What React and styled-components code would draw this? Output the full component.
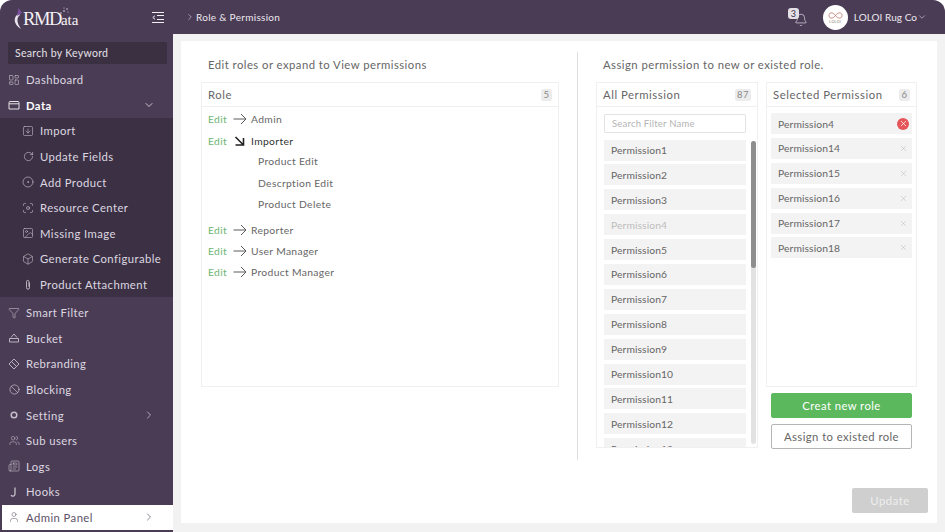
import React from "react";
import styled, { createGlobalStyle } from "styled-components";
import {
  LayoutDashboard,
  SquareArrowDown,
  RotateCw,
  CircleDot,
  Focus,
  Image,
  Box,
  Filter,
  Ban,
  Users,
  Newspaper,
  User,
  ChevronDown,
  ChevronRight,
  Bell,
  X,
} from "lucide-react";

const FONT = `"Lato", "Noto Sans", sans-serif`;

const GlobalStyle = createGlobalStyle`
  html, body {
    margin: 0;
    padding: 0;
    background: #fff;
  }
  body {
    width: 945px;
    height: 532px;
    overflow: hidden;
    font-family: ${FONT};
  }
  * {
    box-sizing: border-box;
  }
`;

const Shell = styled.div`
  width: 945px;
  height: 532px;
  display: grid;
  grid-template-columns: 173px 772px;
  grid-template-rows: 34px 1fr;
  background: #4b3c55;
  border-radius: 12px 12px 0 0;
  overflow: hidden;
`;

const Brand = styled.div`
  display: flex;
  align-items: center;
  justify-content: space-between;
  padding: 0 9px 0 12px;
  color: #f3f0f5;
`;

const LogoWrap = styled.div`
  position: relative;
  display: flex;
  align-items: center;
  height: 30px;
  margin-top: 4px;
`;

const LogoText = styled.span`
  font-family: "Liberation Serif", serif;
  font-size: 18.5px;
  letter-spacing: -1.4px;
  margin-left: -2px;
  color: #f5f2f7;
  small {
    font-size: 15px;
    letter-spacing: 0;
  }
`;

const Sparkles = styled.svg`
  position: absolute;
  left: 46px;
  top: 2px;
`;

const TopBar = styled.header`
  display: flex;
  align-items: center;
  justify-content: space-between;
  padding: 0 18px 0 12px;
  color: #ece8ef;
  font-size: 10px;
  letter-spacing: 0.3px;
`;

const Crumb = styled.div`
  display: flex;
  align-items: center;
  gap: 1px;
`;

const Account = styled.div`
  display: flex;
  align-items: center;
  letter-spacing: 0.05px;
`;

const BellWrap = styled.div`
  position: relative;
  width: 20px;
  height: 20px;
  margin-right: 15px;
  display: flex;
  align-items: flex-end;
  justify-content: flex-end;
`;

const BellBadge = styled.span`
  position: absolute;
  left: 0;
  top: 1px;
  width: 11px;
  height: 11px;
  border-radius: 3px;
  background: #e3e1e6;
  color: #3c3046;
  font-size: 9px;
  line-height: 11px;
  text-align: center;
`;

const Avatar = styled.div`
  width: 25px;
  height: 25px;
  border-radius: 50%;
  background: #fff;
  margin-right: 6px;
  display: flex;
  flex-direction: column;
  align-items: center;
  justify-content: center;
  color: #8a6f66;
  font-size: 3.5px;
  line-height: 4px;
  letter-spacing: 0.4px;
`;

const Side = styled.nav`
  display: flex;
  flex-direction: column;
  padding-top: 8px;
  min-height: 0;
`;

const SearchBox = styled.div`
  margin: 0 6px 3px 8px;
  height: 22px;
  line-height: 22px;
  padding-left: 7px;
  background: #3b3042;
  color: #e4e0e8;
  font-size: 10.5px;
  letter-spacing: 0.3px;
  border-radius: 1px;
`;

const SubMenu = styled.div`
  background: #3c3144;
  margin-bottom: 2.6px;
`;

const NavRow = styled.div`
  height: 25.6px;
  flex: none;
  display: flex;
  align-items: center;
  padding-left: ${(p) => (p.$active ? "6px" : p.$sub ? "22px" : "8px")};
  padding-right: 18px;
  gap: 6px;
  font-size: 11.3px;
  letter-spacing: 0.42px;
  color: ${(p) => (p.$active ? "#5d5166" : p.$bright ? "#fff" : "#dcd7e0")};
  font-weight: ${(p) => (p.$bright ? 700 : 400)};
  background: ${(p) => (p.$active ? "#fff" : "transparent")};
  margin-left: ${(p) => (p.$active ? "2px" : "0")};
`;

const IconSlot = styled.span`
  width: 12px;
  height: 12px;
  flex: none;
  display: flex;
  align-items: center;
  justify-content: center;
  opacity: 0.85;
  font-weight: 400;
`;

const NavLabel = styled.span`
  flex: 1;
  white-space: nowrap;
`;

const Main = styled.main`
  background: #f2f2f2;
  padding: 7px 8px 9px 8px;
  min-height: 0;
  min-width: 0;
`;

const Card = styled.section`
  height: 100%;
  background: #fff;
  display: grid;
  grid-template-columns: 377px 1fr;
  padding: 11px 9px 9px 20px;
  position: relative;
  color: #5d5d5d;
`;

const LeftPane = styled.div`
  display: flex;
  flex-direction: column;
  height: 408px;
  padding-right: 18px;
  border-right: 1px solid #dedede;
`;

const RightPane = styled.div`
  display: flex;
  flex-direction: column;
  height: 408px;
  padding-left: 18px;
`;

const PaneTitle = styled.div`
  height: 30px;
  padding: 6px 0 0 7px;
  font-size: 11.3px;
  letter-spacing: 0.46px;
  color: #666;
`;

const Panel = styled.div`
  border: 1px solid #f0f0f0;
  width: ${(p) => p.$width}px;
  height: ${(p) => p.$height}px;
  flex: none;
  display: flex;
  flex-direction: column;
  overflow: hidden;
`;

const PanelHead = styled.div`
  height: 24px;
  flex: none;
  display: flex;
  align-items: center;
  justify-content: space-between;
  padding: 0 6px;
  border-bottom: 1px solid #f0f0f0;
  font-size: 11.3px;
  letter-spacing: 0.55px;
  color: #666;
`;

const Count = styled.span`
  background: #ececec;
  color: #8a8a8a;
  font-size: 9.5px;
  height: 12px;
  line-height: 12px;
  padding: 0 2px;
  min-width: 11px;
  text-align: center;
  border-radius: 2px;
`;

const RoleList = styled.div`
  padding: 1.5px 6px 0;
`;

const RoleRow = styled.div`
  height: 21.4px;
  display: flex;
  align-items: center;
  font-size: 10.3px;
  letter-spacing: 0.35px;
  color: ${(p) => (p.$open ? "#333" : "#666")};
  margin-top: ${(p) => (p.$gap ? "3.5px" : "0")};
`;

const EditLink = styled.span`
  color: #6fb573;
  width: 25px;
`;

const ArrowSlot = styled.span`
  width: 18px;
  display: flex;
`;

const RolePerm = styled.div`
  height: 21.4px;
  line-height: 21.4px;
  padding-left: 50px;
  font-size: 10.3px;
  letter-spacing: 0.35px;
  color: #666;
`;

const Columns = styled.div`
  display: flex;
  gap: 8px;
`;

const SideColumn = styled.div`
  display: flex;
  flex-direction: column;
`;

const FilterInput = styled.input`
  display: block;
  width: 142px;
  height: 19px;
  margin: 7px 0 6.5px 7px;
  flex: none;
  border: 1px solid #e3e3e3;
  border-radius: 1px;
  padding: 0 7px;
  font-family: ${FONT};
  font-size: 9.5px;
  letter-spacing: 0.2px;
  outline: none;
  &::placeholder {
    color: #b4b4b4;
  }
`;

const ListArea = styled.div`
  display: flex;
  flex: 1;
  min-height: 0;
  overflow: hidden;
  padding-left: 7px;
`;

const PermStack = styled.div`
  width: 142px;
  display: flex;
  flex-direction: column;
  gap: 3.9px;
`;

const PermItem = styled.div`
  height: 21px;
  flex: none;
  background: #f3f3f3;
  display: flex;
  align-items: center;
  justify-content: space-between;
  padding: 0 3px 0 7px;
  font-size: 10.3px;
  letter-spacing: 0.1px;
  color: ${(p) => (p.$muted ? "#bdbdbd" : "#666")};
`;

const Track = styled.div`
  width: 5px;
  height: 303px;
  margin: 1px 0 0 5px;
  border-radius: 3px;
  background: #e2e2e2;
`;

const Thumb = styled.div`
  height: 127px;
  border-radius: 3px;
  background: #8e8e8e;
`;

const SelectedStack = styled.div`
  display: flex;
  flex-direction: column;
  gap: 3.9px;
  padding: 6px 4px 0;
`;

const RemoveBadge = styled.span`
  width: 12px;
  height: 12px;
  border-radius: 50%;
  display: flex;
  align-items: center;
  justify-content: center;
  background: ${(p) => (p.$hot ? "#e5565a" : "transparent")};
  color: ${(p) => (p.$hot ? "#fff" : "#b0b0b0")};
`;

const ActionButton = styled.button`
  width: 141px;
  height: 25px;
  margin: 6px 0 0 5px;
  border-radius: 2px;
  font-family: ${FONT};
  font-size: 11.3px;
  letter-spacing: 0.42px;
  cursor: pointer;
  padding: 0;
  background: ${(p) => (p.$primary ? "#5cb85c" : "#fff")};
  color: ${(p) => (p.$primary ? "#fff" : "#666")};
  border: 1px solid ${(p) => (p.$primary ? "#5cb85c" : "#b5b5b5")};
`;

const UpdateButton = styled.button`
  position: absolute;
  right: 9px;
  bottom: 10px;
  width: 76px;
  height: 25px;
  border: none;
  border-radius: 2px;
  background: #cfcfcf;
  color: #eeeeee;
  font-family: ${FONT};
  font-size: 11.3px;
  letter-spacing: 0.5px;
`;

const Glyph = ({ children, sw = 1 }) => (
  <svg width="12" height="12" viewBox="0 0 12 12" fill="none" stroke="currentColor" strokeWidth={sw}>
    {children}
  </svg>
);

const FolderIcon = () => (
  <Glyph>
    <path d="M1 3.5a1 1 0 0 1 1-1h8a1 1 0 0 1 1 1V10H1Z" />
    <path d="M1 4.8h10" />
  </Glyph>
);

const ClipIcon = () => (
  <Glyph sw={0.9}>
    <path d="M7.5 3.5v5.2a1.5 1.5 0 0 1-3 0V2.6a1.2 1.2 0 0 1 2.4 0v5.2" />
  </Glyph>
);

const BucketIcon = () => (
  <Glyph sw={0.9}>
    <path d="M3 5.5L6 2L9 5.5" />
    <path d="M1.5 6.5h9v3.5h-9Z" />
  </Glyph>
);

const DiamondIcon = () => (
  <Glyph sw={0.9}>
    <path d="M6 1L11 6L6 11L1 6Z" />
    <path d="M3.5 3.5L8.5 8.5" />
  </Glyph>
);

const RingIcon = () => (
  <Glyph sw={1.5}>
    <circle cx="6" cy="6" r="2.8" />
  </Glyph>
);

const HookIcon = () => (
  <Glyph sw={1.3}>
    <path d="M7 1.5V8a2.2 2.2 0 0 1-4 1.2" />
  </Glyph>
);

const MenuToggle = () => (
  <svg width="12" height="13" viewBox="0 0 12 13" fill="none" stroke="currentColor" strokeWidth="1">
    <path d="M0 1.5h12M5 4.5h7M5 8.5h7M0 11.5h12" />
    <path d="M3 4.7L0.8 6.5L3 8.3" />
  </svg>
);

const ThinArrow = () => (
  <svg width="14" height="12" viewBox="0 0 14 12" fill="none" stroke="#5a5a5a" strokeWidth="1">
    <path d="M0.5 6H13M8 1L13 6L8 11" />
  </svg>
);

const OpenArrow = () => (
  <svg width="14" height="12" viewBox="0 0 14 12" fill="none" stroke="#222" strokeWidth="1.6">
    <path d="M2.5 2L10 9.5M2.5 10H10.5V3" />
  </svg>
);

const Logo = () => (
  <LogoWrap>
    <svg width="13" height="24" viewBox="0 0 13 24">
      <path d="M7 6C1 10 1 17 9 22C5 16 4 11 8 8Z" fill="#e9e4ee" />
      <path d="M5 9L6.5 1L10 6Z" fill="#7b4fa0" />
    </svg>
    <LogoText>
      RMD<small>ata</small>
    </LogoText>
    <Sparkles width="12" height="12" viewBox="0 0 12 12" fill="#e9e4ee">
      <circle cx="3" cy="7" r="0.7" />
      <circle cx="6" cy="5" r="0.8" />
      <circle cx="9" cy="3" r="0.7" />
      <circle cx="10" cy="6" r="0.5" />
      <circle cx="6" cy="2" r="0.5" />
    </Sparkles>
  </LogoWrap>
);

const Loloi = () => (
  <svg width="17" height="9" viewBox="0 0 17 9" fill="none" stroke="#b9705f" strokeWidth="0.8">
    <path d="M8.5 4.5C6 1 2 1 2 4.5S6 8 8.5 4.5S15 1 15 4.5S11 8 8.5 4.5Z" />
  </svg>
);

const subItems = [
  ["Import", <SquareArrowDown size={12} strokeWidth={1.2} />],
  ["Update Fields", <RotateCw size={11} strokeWidth={1.4} />],
  ["Add Product", <CircleDot size={12} strokeWidth={1.3} />],
  ["Resource Center", <Focus size={12} strokeWidth={1.3} />],
  ["Missing Image", <Image size={12} strokeWidth={1.2} />],
  ["Generate Configurable", <Box size={12} strokeWidth={1.2} />],
  ["Product Attachment", <ClipIcon />],
];

const mainItems = [
  ["Smart Filter", <Filter size={12} strokeWidth={1.2} />],
  ["Bucket", <BucketIcon />],
  ["Rebranding", <DiamondIcon />],
  ["Blocking", <Ban size={11} strokeWidth={1.5} />],
  ["Setting", <RingIcon />, true],
  ["Sub users", <Users size={11} strokeWidth={1.2} />],
  ["Logs", <Newspaper size={12} strokeWidth={1.2} />],
  ["Hooks", <HookIcon />],
];

const roles = ["Reporter", "User Manager", "Product Manager"];
const importerPerms = ["Product Edit", "Descrption Edit", "Product Delete"];
const allPerms = Array.from({ length: 13 }, (_, i) => i + 1);
const selectedPerms = [14, 15, 16, 17, 18];

const Item = ({ icon, label, sub, chevron, active, bright }) => (
  <NavRow $sub={sub} $active={active} $bright={bright}>
    <IconSlot>{icon}</IconSlot>
    <NavLabel>{label}</NavLabel>
    {chevron === "right" && <ChevronRight size={12} strokeWidth={1.4} />}
    {chevron === "down" && <ChevronDown size={12} strokeWidth={1.4} />}
  </NavRow>
);

const Role = ({ name, open, gap }) => (
  <RoleRow $open={open} $gap={gap}>
    <EditLink>Edit</EditLink>
    <ArrowSlot>{open ? <OpenArrow /> : <ThinArrow />}</ArrowSlot>
    {name}
  </RoleRow>
);

export default function App() {
  return (
    <>
      <GlobalStyle />
      <Shell>
        <Brand>
          <Logo />
          <MenuToggle />
        </Brand>
        <TopBar>
          <Crumb>
            <ChevronRight size={10} strokeWidth={1.3} />
            Role &amp; Permission
          </Crumb>
          <Account>
            <BellWrap>
              <BellBadge>3</BellBadge>
              <Bell size={14} strokeWidth={1.1} />
            </BellWrap>
            <Avatar>
              <Loloi />
              LOLOI
            </Avatar>
            LOLOI Rug Co
            <ChevronDown size={10} strokeWidth={1.3} />
          </Account>
        </TopBar>
        <Side>
          <SearchBox>Search by Keyword</SearchBox>
          <Item icon={<LayoutDashboard size={12} strokeWidth={1.2} />} label="Dashboard" />
          <Item icon={<FolderIcon />} label="Data" chevron="down" bright />
          <SubMenu>
            {subItems.map(([label, icon]) => (
              <Item key={label} icon={icon} label={label} sub />
            ))}
          </SubMenu>
          {mainItems.map(([label, icon, more]) => (
            <Item key={label} icon={icon} label={label} chevron={more ? "right" : undefined} />
          ))}
          <Item icon={<User size={12} strokeWidth={1.2} />} label="Admin Panel" chevron="right" active />
        </Side>
        <Main>
          <Card>
            <LeftPane>
              <PaneTitle>Edit roles or expand to View permissions</PaneTitle>
              <Panel $width={358} $height={305}>
                <PanelHead>
                  Role
                  <Count>5</Count>
                </PanelHead>
                <RoleList>
                  <Role name="Admin" />
                  <Role name="Importer" open />
                  {importerPerms.map((perm) => (
                    <RolePerm key={perm}>{perm}</RolePerm>
                  ))}
                  {roles.map((name, i) => (
                    <Role key={name} name={name} gap={i === 0} />
                  ))}
                </RoleList>
              </Panel>
            </LeftPane>
            <RightPane>
              <PaneTitle>Assign permission to new or existed role.</PaneTitle>
              <Columns>
                <Panel $width={162} $height={366}>
                  <PanelHead>
                    All Permission
                    <Count>87</Count>
                  </PanelHead>
                  <FilterInput placeholder="Search Filter Name" readOnly />
                  <ListArea>
                    <PermStack>
                      {allPerms.map((n) => (
                        <PermItem key={n} $muted={n === 4}>
                          Permission{n}
                        </PermItem>
                      ))}
                    </PermStack>
                    <Track>
                      <Thumb />
                    </Track>
                  </ListArea>
                </Panel>
                <SideColumn>
                  <Panel $width={151} $height={305}>
                    <PanelHead>
                      Selected Permission
                      <Count>6</Count>
                    </PanelHead>
                    <SelectedStack>
                      <PermItem>
                        Permission4
                        <RemoveBadge $hot>
                          <X size={9} strokeWidth={2} />
                        </RemoveBadge>
                      </PermItem>
                      {selectedPerms.map((n) => (
                        <PermItem key={n}>
                          Permission{n}
                          <RemoveBadge>
                            <X size={9} strokeWidth={1.2} />
                          </RemoveBadge>
                        </PermItem>
                      ))}
                    </SelectedStack>
                  </Panel>
                  <ActionButton $primary>Creat new role</ActionButton>
                  <ActionButton>Assign to existed role</ActionButton>
                </SideColumn>
              </Columns>
            </RightPane>
            <UpdateButton>Update</UpdateButton>
          </Card>
        </Main>
      </Shell>
    </>
  );
}
